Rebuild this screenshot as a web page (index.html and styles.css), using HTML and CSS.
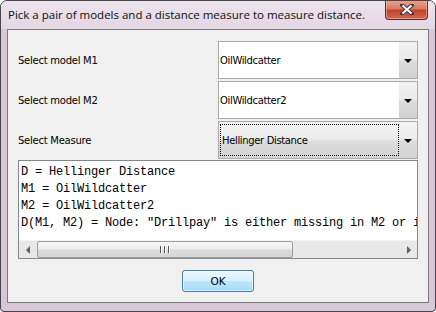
FILE: index.html
```html
<!DOCTYPE html>
<html>
<head>
<meta charset="utf-8">
<link rel="stylesheet" href="styles.css">
</head>
<body>
<div class="window">
  <div class="titlebar">
    <span class="title">Pick a pair of models and a distance measure to measure distance.</span>
    <div class="close">
      <svg width="14" height="11" viewBox="0 0 14 11">
        <path d="M2 1 L12 10 M12 1 L2 10" stroke="#3c3c46" stroke-width="4" stroke-linecap="square"/>
        <path d="M2.5 1.5 L11.5 9.5 M11.5 1.5 L2.5 9.5" stroke="#ffffff" stroke-width="2"/>
      </svg>
    </div>
  </div>
  <div class="client">
    <div class="form">
      <div class="row">
        <span class="label">Select model M1</span>
        <div class="combo editable">
          <span class="value">OilWildcatter</span>
          <span class="arrowbtn"><span class="arrow"></span></span>
        </div>
      </div>
      <div class="row">
        <span class="label">Select model M2</span>
        <div class="combo editable">
          <span class="value">OilWildcatter2</span>
          <span class="arrowbtn"><span class="arrow"></span></span>
        </div>
      </div>
      <div class="row">
        <span class="label">Select Measure</span>
        <div class="combo focused">
          <span class="value focusrect">Hellinger Distance</span>
          <span class="arrowbtn"><span class="arrow"></span></span>
        </div>
      </div>
      <div class="output">
        <div class="text">
          <div>D = Hellinger Distance</div>
          <div>M1 = OilWildcatter</div>
          <div>M2 = OilWildcatter2</div>
          <div>D(M1, M2) = Node: "Drillpay" is either missing in M2 or i</div>
        </div>
        <div class="hscroll">
          <span class="sbtn"><span class="larr"></span></span>
          <span class="track">
            <span class="thumb"><span class="grip"><i></i><i></i><i></i></span></span>
          </span>
          <span class="sbtn"><span class="rarr"></span></span>
        </div>
      </div>
    </div>
    <div class="buttons">
      <button class="ok">OK</button>
    </div>
  </div>
</div>
</body>
</html>
```

FILE: styles.css
```css
html, body {
  margin: 0;
  padding: 0;
  background: #ffffff;
}
.window {
  width: 436px;
  height: 312px;
  box-sizing: border-box;
  border: 1px solid #464646;
  border-radius: 7px 7px 4px 4px;
  background: #d9c6d9;
  display: flex;
  flex-direction: column;
  padding: 0 6px 8px 6px;
  overflow: hidden;
}
.titlebar {
  height: 28px;
  display: flex;
  align-items: flex-start;
  position: relative;
  margin: 0 -6px;
  padding: 0 6px;
  background: linear-gradient(#ece4ec, #e4d6e4);
}
.title {
  font-family: "Open Sans", "Noto Sans", sans-serif;
  font-size: 11.5px;
  color: #101010;
  margin-top: 6px;
  margin-left: 1px;
  white-space: nowrap;
}
.close {
  position: absolute;
  right: 7px;
  top: -1px;
  width: 43px;
  height: 20px;
  box-sizing: border-box;
  border: 1px solid #5a2c2a;
  border-top: none;
  border-radius: 0 0 4px 4px;
  background: linear-gradient(#e8a895 0%, #d77a66 45%, #c2412c 55%, #d06a4f 100%);
  display: flex;
  align-items: center;
  justify-content: center;
  box-shadow: inset 0 0 0 1px rgba(255,220,210,0.45);
}
.client {
  flex: 1;
  background: #f0f0f0;
  border: 1px solid #7a7a7a;
  display: flex;
  flex-direction: column;
  font-family: "DejaVu Sans", sans-serif;
  font-size: 10px;
  letter-spacing: -0.25px;
  color: #000;
}
.form {
  padding: 11px 10px 0 10px;
  display: flex;
  flex-direction: column;
}
.row {
  display: flex;
  align-items: center;
  height: 38px;
  margin-bottom: 2px;
}
.row:nth-child(3) { margin-bottom: 1px; }
.label {
  width: 200px;
  box-sizing: border-box;
  padding-left: 0;
}
.combo {
  width: 200px;
  height: 38px;
  box-sizing: border-box;
  border: 1px solid #ababab;
  display: flex;
  background: #fff;
}
.combo .value {
  flex: 1;
  display: flex;
  align-items: center;
  padding-left: 1px;
  letter-spacing: -0.35px;
}
.combo.focused {
  background: linear-gradient(#f3f3f3 0%, #ebebeb 48%, #dddddd 52%, #d3d3d3 100%);
}
.focusrect {
  margin: 2px 0 2px 1px;
  border: 1px dotted #000;
}
.arrowbtn {
  width: 18px;
  display: flex;
  align-items: center;
  justify-content: center;
  background: linear-gradient(#f2f2f2 0%, #ebebeb 48%, #dddddd 52%, #d1d1d1 100%);
}
.combo.focused .arrowbtn { background: transparent; }
.arrow {
  width: 0;
  height: 0;
  border-left: 4px solid transparent;
  border-right: 4px solid transparent;
  border-top: 4px solid #000;
  margin-top: 2px;
}
.output {
  height: 99px;
  box-sizing: border-box;
  border: 1px solid #828790;
  background: #fff;
  display: flex;
  flex-direction: column;
}
.text {
  flex: 1;
  overflow: hidden;
  white-space: nowrap;
  padding: 3px 0 0 2px;
  font-family: "Liberation Mono", "Courier New", monospace;
  font-size: 12px;
  letter-spacing: -0.2px;
  line-height: 17px;
  color: #000;
}
.hscroll {
  height: 17px;
  display: flex;
  background: #e8e8e8;
  border-top: 1px solid #f2f2f2;
}
.sbtn {
  width: 17px;
  display: flex;
  align-items: center;
  justify-content: center;
}
.larr {
  width: 0; height: 0;
  border-top: 4px solid transparent;
  border-bottom: 4px solid transparent;
  border-right: 4px solid #606060;
}
.rarr {
  width: 0; height: 0;
  border-top: 4px solid transparent;
  border-bottom: 4px solid transparent;
  border-left: 4px solid #606060;
}
.track {
  flex: 1;
  display: flex;
  align-items: stretch;
  padding: 0 1px;
}
.thumb {
  width: 256px;
  box-sizing: border-box;
  border: 1px solid #9d9d9d;
  border-radius: 2px;
  background: linear-gradient(#f6f6f6 0%, #ececec 48%, #dcdcdc 52%, #d6d6d6 100%);
  display: flex;
  align-items: center;
  justify-content: center;
}
.grip { display: flex; gap: 2px; }
.grip i {
  display: block;
  width: 1px;
  height: 7px;
  background: #555;
  border-right: 1px solid #fff;
}
.buttons {
  flex: 1;
  display: flex;
  justify-content: center;
  align-items: flex-start;
  padding-top: 11px;
}
.ok {
  width: 72px;
  height: 22px;
  box-sizing: border-box;
  border: 1px solid #3c7fb1;
  border-radius: 3px;
  background: linear-gradient(#eaf6fd 0%, #d9f0fc 48%, #bee6fd 52%, #a7d9f5 100%);
  font-family: "DejaVu Sans", sans-serif;
  font-size: 10.5px;
  color: #000;
  padding: 0;
  box-shadow: inset 0 0 0 1px rgba(255,255,255,0.6);
}
```
